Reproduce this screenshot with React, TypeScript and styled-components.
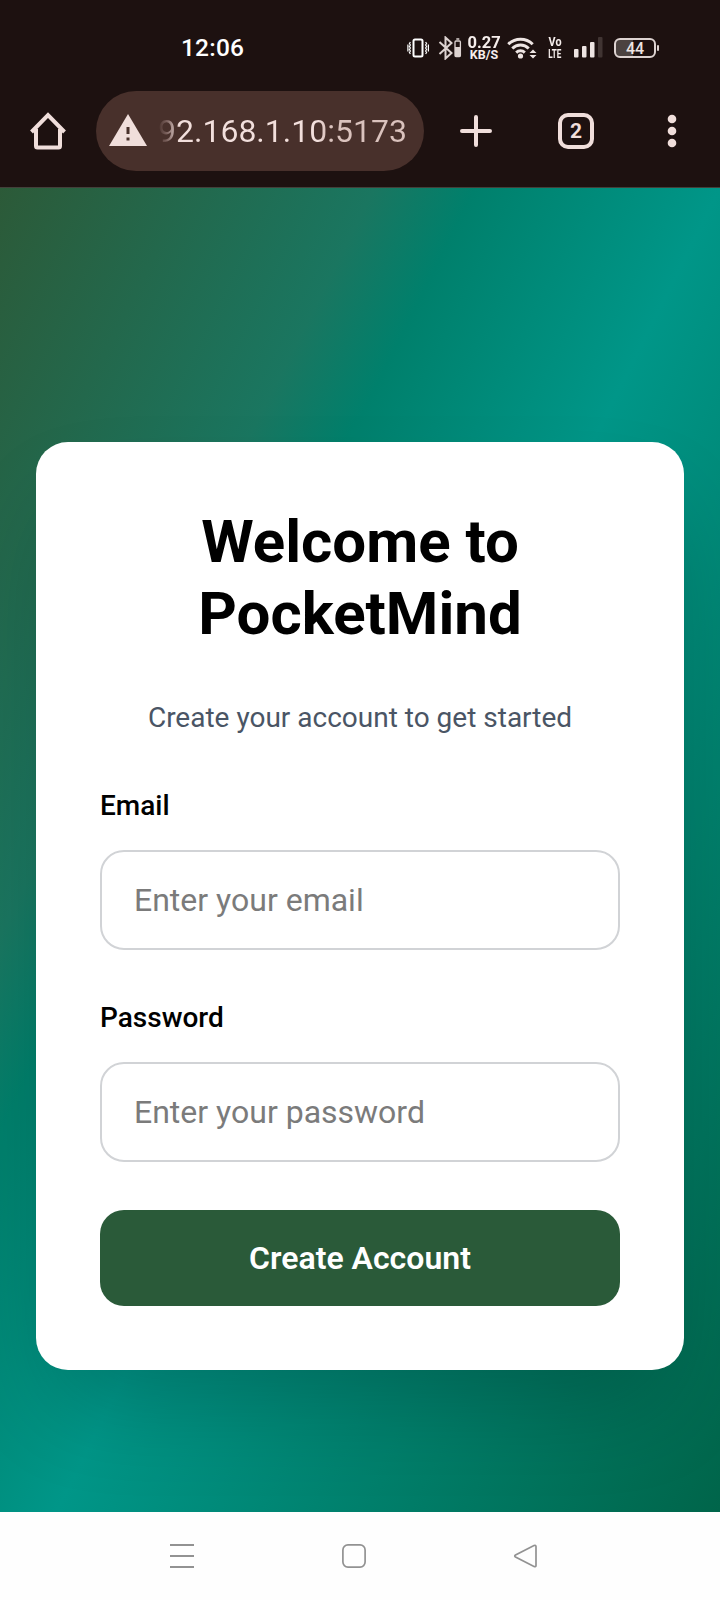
import React from "react";
import styled, { createGlobalStyle } from "styled-components";

const Global = createGlobalStyle`
  * { box-sizing: border-box; }
  body { margin: 0; font-family: Roboto, "Liberation Sans", sans-serif; background: #fff; }
`;

const Screen = styled.div`
  width: 720px;
  height: 1600px;
  display: flex;
  flex-direction: column;
  overflow: hidden;
`;

const Chrome = styled.header`
  height: 188px;
  flex: none;
  background: #1d1110;
  border-bottom: 1px solid #43403a;
`;

const StatusBar = styled.div`
  height: 91px;
  display: flex;
  align-items: center;
  padding: 4px 61px 0 181px;
`;

const Clock = styled.div`
  width: 226px;
  flex: none;
  font: 500 24.5px/30px Roboto, sans-serif;
  letter-spacing: 0.2px;
  color: #fff;
`;

const StatusIcon = styled.svg<{ $gap: number }>`
  display: block;
  flex: none;
  margin-left: ${(p) => p.$gap}px;
`;

const Stack = styled.div<{ $gap: number; $width: number }>`
  width: ${(p) => p.$width}px;
  flex: none;
  margin-left: ${(p) => p.$gap}px;
  display: flex;
  flex-direction: column;
  align-items: center;
  color: #f6eeec;
`;

const StackLine = styled.span<{ $size: number; $height: number; $squeeze?: number }>`
  font-family: Roboto, sans-serif;
  font-weight: 700;
  font-size: ${(p) => p.$size}px;
  line-height: ${(p) => p.$height}px;
  white-space: nowrap;
  transform: scaleX(${(p) => p.$squeeze ?? 1});
`;

const Battery = styled.div`
  position: relative;
  flex: none;
  width: 42px;
  height: 20px;
  margin-left: 11px;
  border: 2px solid #ddd3d1;
  border-radius: 6px;
  background: linear-gradient(90deg, #4b4240 44%, transparent 44%);
  color: #eee5e3;
  font: 500 16px/17px Roboto, sans-serif;
  text-align: center;
  &::after {
    content: "";
    position: absolute;
    right: -5px;
    top: 5px;
    width: 2px;
    height: 6px;
    border-radius: 1px;
    background: #ddd3d1;
  }
`;

const Toolbar = styled.div`
  height: 80px;
  display: flex;
  align-items: center;
`;

const HomeIcon = styled.svg`
  margin: 0 30px 0 30px;
  flex: none;
`;

const UrlBar = styled.div`
  width: 328px;
  height: 80px;
  flex: none;
  border-radius: 40px;
  background: #48302b;
  display: flex;
  align-items: center;
  padding-left: 13px;
`;

const WarningIcon = styled.svg`
  flex: none;
  margin-bottom: 3px;
`;

const Url = styled.div`
  margin-left: 11px;
  font: 400 32px/40px Roboto, sans-serif;
  background: linear-gradient(90deg, #48302b 0, #7d635f 9px, #f2dfdc 21px, #f2dfdc 160px, #dac2bd 168px);
  background-clip: text;
  -webkit-background-clip: text;
  color: transparent;
`;

const Actions = styled.div`
  flex: 1;
  display: flex;
  align-items: center;
  padding-left: 36px;
`;

const Tabs = styled.div`
  width: 36px;
  height: 36px;
  margin-left: 66px;
  border: 4px solid #f0dedb;
  border-radius: 10px;
  color: #f0dedb;
  font: 700 21px/29px Roboto, sans-serif;
  text-align: center;
`;

const Menu = styled.svg`
  margin-left: 73px;
`;

const Viewport = styled.main`
  height: 1324px;
  flex: none;
  overflow: hidden;
`;

const Page = styled.div`
  height: 1436px;
  display: flex;
  align-items: center;
  justify-content: center;
  background: linear-gradient(to bottom right, #2c5a38 0%, #1a7660 26%, #00806c 33%, #009688 50%, #00654a 96%, #00654a 100%);
`;

const Card = styled.form`
  width: 648px;
  height: 928px;
  padding: 64px;
  border-radius: 32px;
  background: #fff;
  box-shadow: 0 50px 100px -24px rgba(0, 0, 0, 0.22);
  display: flex;
  flex-direction: column;
`;

const Title = styled.h1`
  margin: 0 0 48px;
  font-size: 60px;
  line-height: 72px;
  font-weight: 700;
  text-align: center;
  color: #000;
`;

const Subtitle = styled.p`
  margin: 0 0 48px;
  font-size: 28px;
  line-height: 40px;
  text-align: center;
  color: #4a5565;
`;

const Field = styled.div`
  margin-bottom: 48px;
  display: flex;
  flex-direction: column;
`;

const Label = styled.label`
  margin-bottom: 24px;
  font-size: 28px;
  line-height: 40px;
  font-weight: 500;
  color: #000;
`;

const Input = styled.input`
  height: 100px;
  padding: 0 32px;
  border: 2px solid #d1d3d6;
  border-radius: 24px;
  font: 400 32px/48px Roboto, sans-serif;
  background: #fff;
  outline: none;
  &::placeholder { color: #7b7b7b; opacity: 1; }
`;

const Submit = styled.button`
  height: 96px;
  flex: none;
  border: 0;
  border-radius: 24px;
  background: #2a5a39;
  color: #fff;
  font: 600 32px/48px Roboto, sans-serif;
`;

const NavBar = styled.nav`
  height: 88px;
  flex: none;
  background: #fefefe;
  display: flex;
  align-items: center;
  padding-left: 169px;
  gap: 146px;
`;

export default function App() {
  return (
    <Screen>
      <Global />
      <Chrome>
        <StatusBar>
          <Clock>12:06</Clock>
          <StatusIcon $gap={0} width="22" height="20" viewBox="0 0 22 20" fill="none" stroke="#fff">
            <rect x="6.5" y="1.5" width="9" height="17" rx="1.5" strokeWidth="2" />
            <path d="M3.4 4l-1 1.5 1 1.500-1 1.500 1 1.500-1 1.500 1 1.500-1 1.500 1 1.500M18.600 4l1 1.500-1 1.500 1 1.500-1 1.500 1 1.500-1 1.500 1 1.500-1 1.500M.9 6.500v7M21.400 6.500v7" strokeWidth="1.2" />
          </StatusIcon>
          <StatusIcon $gap={9} width="24" height="24" viewBox="0 0 24 24" fill="none" stroke="#ddd3d1">
            <path d="M1.500 6l12 11-6 5.500v-21l6 5.500-12 11" strokeWidth="2" />
            <rect x="17" y="5" width="5.400" height="15.500" rx="1" strokeWidth="1.3" />
            <path d="M18.300 3h3" strokeWidth="1.5" />
            <rect x="17" y="11" width="5.400" height="9.500" fill="#ddd3d1" stroke="none" />
          </StatusIcon>
          <Stack $gap={5} $width={34}>
            <StackLine $size={17} $height={14} $squeeze={0.97}>0.27</StackLine>
            <StackLine $size={12.5} $height={12}>KB/S</StackLine>
          </Stack>
          <StatusIcon $gap={6} width="30" height="23" viewBox="0 0 30 23" fill="none" stroke="#eee5e3">
            <path d="M1.300 8.200a17.400 17.400 0 0 1 24.400 0M5.300 12.500a11.500 11.500 0 0 1 16.400 0M9.200 16.600a6.200 6.200 0 0 1 8.600 0" strokeWidth="3" />
            <circle cx="13.500" cy="20" r="2.600" fill="#eee5e3" stroke="none" />
            <path d="M22.500 17h7L26 13.500zM22.500 19h7L26 22.500z" fill="#eee5e3" stroke="none" />
          </StatusIcon>
          <Stack $gap={10} $width={16}>
            <StackLine $size={13.5} $height={11} $squeeze={0.8}>Vo</StackLine>
            <StackLine $size={13.5} $height={12} $squeeze={0.6}>LTE</StackLine>
          </Stack>
          <StatusIcon $gap={11} width="29" height="21" viewBox="0 0 29 21" fill="#eee5e3">
            <rect x="0" y="12" width="4.500" height="8.500" rx="1" />
            <rect x="8" y="9" width="4.500" height="11.500" rx="1" />
            <rect x="16" y="5" width="4.500" height="15.500" rx="1" />
            <rect x="24" y="0" width="4.500" height="20.500" rx="1" fill="#403432" />
          </StatusIcon>
          <Battery>44</Battery>
        </StatusBar>
        <Toolbar>
          <HomeIcon width="36" height="38" viewBox="0 0 36 38" fill="none" stroke="#f0dedb" strokeWidth="4">
            <path d="M1.500 20L18 3.200 34.500 20M6 17v17q0 1.500 1.500 1.500h21q1.500 0 1.500-1.500V17" />
          </HomeIcon>
          <UrlBar>
            <WarningIcon width="38" height="32" viewBox="0 0 38 32">
              <path d="M19 0L38 32H0z" fill="#f0dedb" />
              <path d="M17.500 13h3v7h-3zM17.500 23.500h3v3h-3z" fill="#48302b" />
            </WarningIcon>
            <Url>92.168.1.10:5173</Url>
          </UrlBar>
          <Actions>
            <svg width="32" height="32" viewBox="0 0 32 32" stroke="#f0dedb" strokeWidth="4" strokeLinecap="round">
              <path d="M2 16h28M16 2v28" />
            </svg>
            <Tabs>2</Tabs>
            <Menu width="10" height="34" viewBox="0 0 10 34" fill="#f0dedb">
              <circle cx="5" cy="5" r="4.300" />
              <circle cx="5" cy="17" r="4.300" />
              <circle cx="5" cy="29" r="4.300" />
            </Menu>
          </Actions>
        </Toolbar>
      </Chrome>
      <Viewport>
        <Page>
          <Card>
            <Title>Welcome to PocketMind</Title>
            <Subtitle>Create your account to get started</Subtitle>
            <Field>
              <Label htmlFor="email">Email</Label>
              <Input id="email" type="email" placeholder="Enter your email" />
            </Field>
            <Field>
              <Label htmlFor="password">Password</Label>
              <Input id="password" type="password" placeholder="Enter your password" />
            </Field>
            <Submit type="button">Create Account</Submit>
          </Card>
        </Page>
      </Viewport>
      <NavBar>
        <svg width="26" height="26" viewBox="0 0 26 26" stroke="#929292" strokeWidth="2">
          <path d="M1 2h24M1 13h24M1 24h24" />
        </svg>
        <svg width="26" height="26" viewBox="0 0 26 26" fill="none" stroke="#929292" strokeWidth="1.700">
          <rect x="1.900" y="1.900" width="22.200" height="22.200" rx="5" />
        </svg>
        <svg width="26" height="26" viewBox="0 0 26 26" fill="none" stroke="#929292" strokeWidth="1.700">
          <path d="M2.500 12q-1.500 1 0 2l18.500 9.500q2 .7 2-1V3.500q0-1.700-2-1z" />
        </svg>
      </NavBar>
    </Screen>
  );
}
